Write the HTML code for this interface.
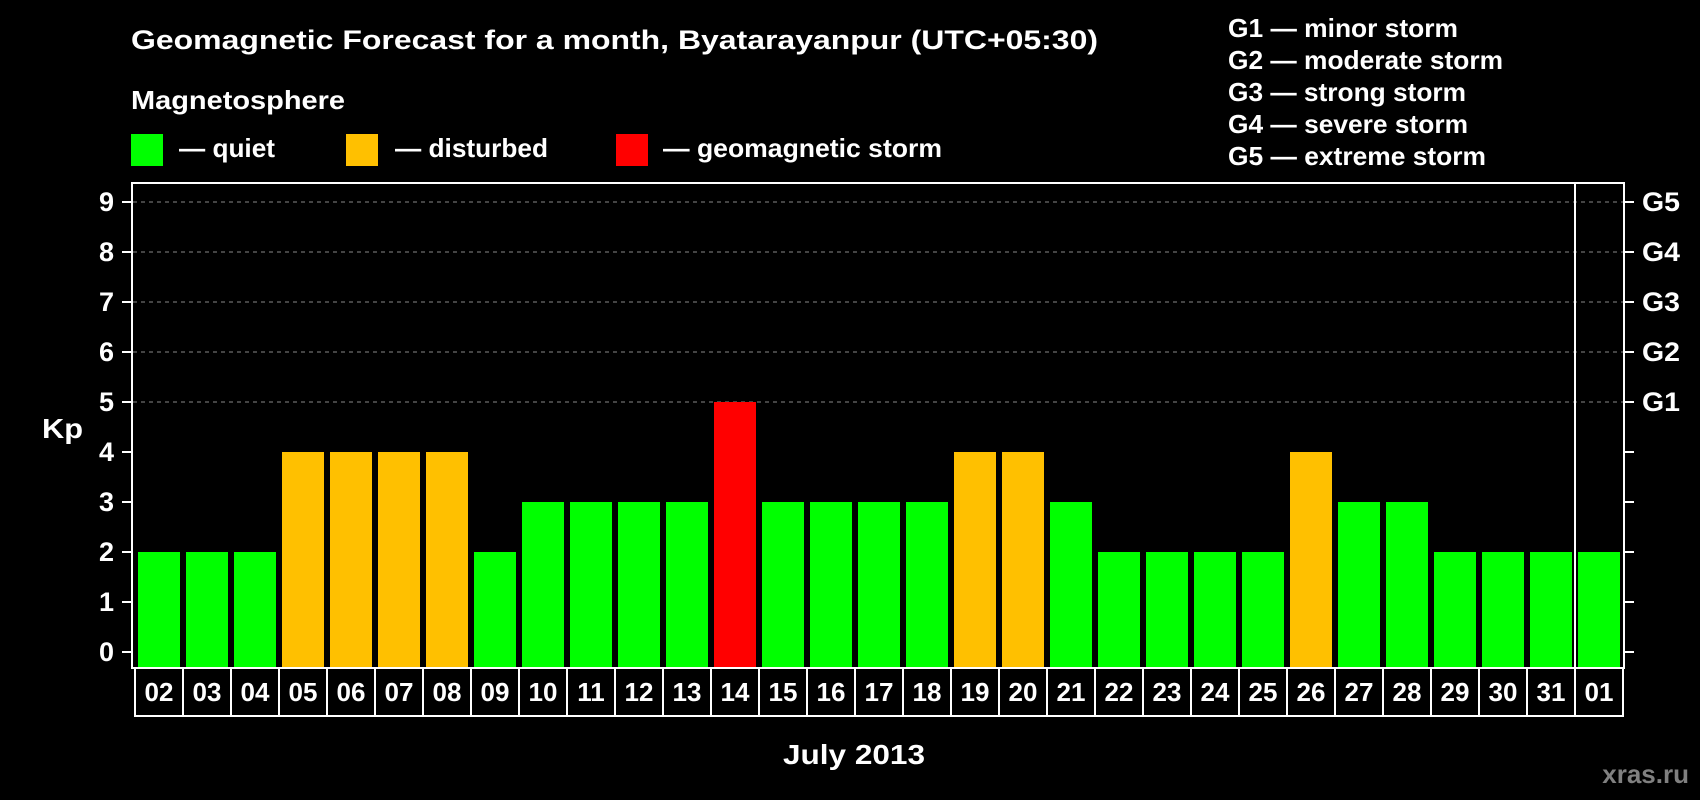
<!DOCTYPE html>
<html><head><meta charset="utf-8"><style>
html,body{margin:0;padding:0;background:#000;width:1700px;height:800px;overflow:hidden}
svg{display:block}
text{font-family:"Liberation Sans",Arial,sans-serif;font-weight:bold;fill:#fff}
</style></head><body>
<svg width="1700" height="800" viewBox="0 0 1700 800" xmlns="http://www.w3.org/2000/svg">
<text x="131" y="49" font-size="27" textLength="967" lengthAdjust="spacingAndGlyphs">Geomagnetic Forecast for a month, Byatarayanpur (UTC+05:30)</text>
<text x="131" y="109" font-size="26" textLength="214" lengthAdjust="spacingAndGlyphs">Magnetosphere</text>
<rect x="131" y="134" width="32" height="32" fill="#00ff00"/>
<text x="179" y="157" font-size="26" textLength="96" lengthAdjust="spacingAndGlyphs">— quiet</text>
<rect x="346" y="134" width="32" height="32" fill="#ffc000"/>
<text x="395" y="157" font-size="26" textLength="153" lengthAdjust="spacingAndGlyphs">— disturbed</text>
<rect x="616" y="134" width="32" height="32" fill="#ff0000"/>
<text x="663" y="157" font-size="26" textLength="279" lengthAdjust="spacingAndGlyphs">— geomagnetic storm</text>
<g font-size="26">
<text x="1228" y="37" textLength="230" lengthAdjust="spacingAndGlyphs">G1 — minor storm</text>
<text x="1228" y="69" textLength="275" lengthAdjust="spacingAndGlyphs">G2 — moderate storm</text>
<text x="1228" y="101" textLength="238" lengthAdjust="spacingAndGlyphs">G3 — strong storm</text>
<text x="1228" y="133" textLength="240" lengthAdjust="spacingAndGlyphs">G4 — severe storm</text>
<text x="1228" y="165" textLength="258" lengthAdjust="spacingAndGlyphs">G5 — extreme storm</text>
</g>
<g stroke="#888" stroke-width="1" stroke-dasharray="4,4">
<line x1="133" y1="202" x2="1623" y2="202"/>
<line x1="133" y1="252" x2="1623" y2="252"/>
<line x1="133" y1="302" x2="1623" y2="302"/>
<line x1="133" y1="352" x2="1623" y2="352"/>
<line x1="133" y1="402" x2="1623" y2="402"/>
</g>
<g>
<rect x="138" y="552" width="42" height="116" fill="#00ff00"/>
<rect x="186" y="552" width="42" height="116" fill="#00ff00"/>
<rect x="234" y="552" width="42" height="116" fill="#00ff00"/>
<rect x="282" y="452" width="42" height="216" fill="#ffc000"/>
<rect x="330" y="452" width="42" height="216" fill="#ffc000"/>
<rect x="378" y="452" width="42" height="216" fill="#ffc000"/>
<rect x="426" y="452" width="42" height="216" fill="#ffc000"/>
<rect x="474" y="552" width="42" height="116" fill="#00ff00"/>
<rect x="522" y="502" width="42" height="166" fill="#00ff00"/>
<rect x="570" y="502" width="42" height="166" fill="#00ff00"/>
<rect x="618" y="502" width="42" height="166" fill="#00ff00"/>
<rect x="666" y="502" width="42" height="166" fill="#00ff00"/>
<rect x="714" y="402" width="42" height="266" fill="#ff0000"/>
<rect x="762" y="502" width="42" height="166" fill="#00ff00"/>
<rect x="810" y="502" width="42" height="166" fill="#00ff00"/>
<rect x="858" y="502" width="42" height="166" fill="#00ff00"/>
<rect x="906" y="502" width="42" height="166" fill="#00ff00"/>
<rect x="954" y="452" width="42" height="216" fill="#ffc000"/>
<rect x="1002" y="452" width="42" height="216" fill="#ffc000"/>
<rect x="1050" y="502" width="42" height="166" fill="#00ff00"/>
<rect x="1098" y="552" width="42" height="116" fill="#00ff00"/>
<rect x="1146" y="552" width="42" height="116" fill="#00ff00"/>
<rect x="1194" y="552" width="42" height="116" fill="#00ff00"/>
<rect x="1242" y="552" width="42" height="116" fill="#00ff00"/>
<rect x="1290" y="452" width="42" height="216" fill="#ffc000"/>
<rect x="1338" y="502" width="42" height="166" fill="#00ff00"/>
<rect x="1386" y="502" width="42" height="166" fill="#00ff00"/>
<rect x="1434" y="552" width="42" height="116" fill="#00ff00"/>
<rect x="1482" y="552" width="42" height="116" fill="#00ff00"/>
<rect x="1530" y="552" width="42" height="116" fill="#00ff00"/>
<rect x="1578" y="552" width="42" height="116" fill="#00ff00"/>
</g>
<rect x="132" y="183" width="1492" height="485" fill="none" stroke="#fff" stroke-width="2"/>
<line x1="1575" y1="183" x2="1575" y2="668" stroke="#fff" stroke-width="2"/>
<g stroke="#fff" stroke-width="2">
<line x1="122" y1="202" x2="131" y2="202"/><line x1="122" y1="252" x2="131" y2="252"/>
<line x1="122" y1="302" x2="131" y2="302"/><line x1="122" y1="352" x2="131" y2="352"/>
<line x1="122" y1="402" x2="131" y2="402"/><line x1="122" y1="452" x2="131" y2="452"/>
<line x1="122" y1="502" x2="131" y2="502"/><line x1="122" y1="552" x2="131" y2="552"/>
<line x1="122" y1="602" x2="131" y2="602"/><line x1="122" y1="652" x2="131" y2="652"/>
<line x1="1625" y1="202" x2="1634" y2="202"/><line x1="1625" y1="252" x2="1634" y2="252"/>
<line x1="1625" y1="302" x2="1634" y2="302"/><line x1="1625" y1="352" x2="1634" y2="352"/>
<line x1="1625" y1="402" x2="1634" y2="402"/><line x1="1625" y1="452" x2="1634" y2="452"/>
<line x1="1625" y1="502" x2="1634" y2="502"/><line x1="1625" y1="552" x2="1634" y2="552"/>
<line x1="1625" y1="602" x2="1634" y2="602"/><line x1="1625" y1="652" x2="1634" y2="652"/>
</g>
<g font-size="27" text-anchor="end">
<text x="114" y="211">9</text><text x="114" y="261">8</text><text x="114" y="311">7</text>
<text x="114" y="361">6</text><text x="114" y="411">5</text><text x="114" y="461">4</text>
<text x="114" y="511">3</text><text x="114" y="561">2</text><text x="114" y="611">1</text>
<text x="114" y="661">0</text>
</g>
<g font-size="27">
<text x="1642" y="211" textLength="38" lengthAdjust="spacingAndGlyphs">G5</text><text x="1642" y="261" textLength="38" lengthAdjust="spacingAndGlyphs">G4</text><text x="1642" y="311" textLength="38" lengthAdjust="spacingAndGlyphs">G3</text>
<text x="1642" y="361" textLength="38" lengthAdjust="spacingAndGlyphs">G2</text><text x="1642" y="411" textLength="38" lengthAdjust="spacingAndGlyphs">G1</text>
</g>
<text x="42" y="438" font-size="28" textLength="41" lengthAdjust="spacingAndGlyphs">Kp</text>
<g stroke="#fff" stroke-width="2" fill="none">
<line x1="135" y1="716" x2="1623" y2="716"/>
<line x1="135" y1="668" x2="135" y2="717"/><line x1="183" y1="668" x2="183" y2="717"/>
<line x1="231" y1="668" x2="231" y2="717"/><line x1="279" y1="668" x2="279" y2="717"/>
<line x1="327" y1="668" x2="327" y2="717"/><line x1="375" y1="668" x2="375" y2="717"/>
<line x1="423" y1="668" x2="423" y2="717"/><line x1="471" y1="668" x2="471" y2="717"/>
<line x1="519" y1="668" x2="519" y2="717"/><line x1="567" y1="668" x2="567" y2="717"/>
<line x1="615" y1="668" x2="615" y2="717"/><line x1="663" y1="668" x2="663" y2="717"/>
<line x1="711" y1="668" x2="711" y2="717"/><line x1="759" y1="668" x2="759" y2="717"/>
<line x1="807" y1="668" x2="807" y2="717"/><line x1="855" y1="668" x2="855" y2="717"/>
<line x1="903" y1="668" x2="903" y2="717"/><line x1="951" y1="668" x2="951" y2="717"/>
<line x1="999" y1="668" x2="999" y2="717"/><line x1="1047" y1="668" x2="1047" y2="717"/>
<line x1="1095" y1="668" x2="1095" y2="717"/><line x1="1143" y1="668" x2="1143" y2="717"/>
<line x1="1191" y1="668" x2="1191" y2="717"/><line x1="1239" y1="668" x2="1239" y2="717"/>
<line x1="1287" y1="668" x2="1287" y2="717"/><line x1="1335" y1="668" x2="1335" y2="717"/>
<line x1="1383" y1="668" x2="1383" y2="717"/><line x1="1431" y1="668" x2="1431" y2="717"/>
<line x1="1479" y1="668" x2="1479" y2="717"/><line x1="1527" y1="668" x2="1527" y2="717"/>
<line x1="1575" y1="668" x2="1575" y2="717"/><line x1="1623" y1="668" x2="1623" y2="717"/>
</g>
<g font-size="26" text-anchor="middle">
<text x="159" y="701">02</text><text x="207" y="701">03</text><text x="255" y="701">04</text>
<text x="303" y="701">05</text><text x="351" y="701">06</text><text x="399" y="701">07</text>
<text x="447" y="701">08</text><text x="495" y="701">09</text><text x="543" y="701">10</text>
<text x="591" y="701">11</text><text x="639" y="701">12</text><text x="687" y="701">13</text>
<text x="735" y="701">14</text><text x="783" y="701">15</text><text x="831" y="701">16</text>
<text x="879" y="701">17</text><text x="927" y="701">18</text><text x="975" y="701">19</text>
<text x="1023" y="701">20</text><text x="1071" y="701">21</text><text x="1119" y="701">22</text>
<text x="1167" y="701">23</text><text x="1215" y="701">24</text><text x="1263" y="701">25</text>
<text x="1311" y="701">26</text><text x="1359" y="701">27</text><text x="1407" y="701">28</text>
<text x="1455" y="701">29</text><text x="1503" y="701">30</text><text x="1551" y="701">31</text>
<text x="1599" y="701">01</text>
</g>
<text x="783" y="764" font-size="28" textLength="142" lengthAdjust="spacingAndGlyphs">July 2013</text>
<text x="1689" y="783" font-size="26" text-anchor="end" style="fill:#808080">xras.ru</text>
</svg>
</body></html>
